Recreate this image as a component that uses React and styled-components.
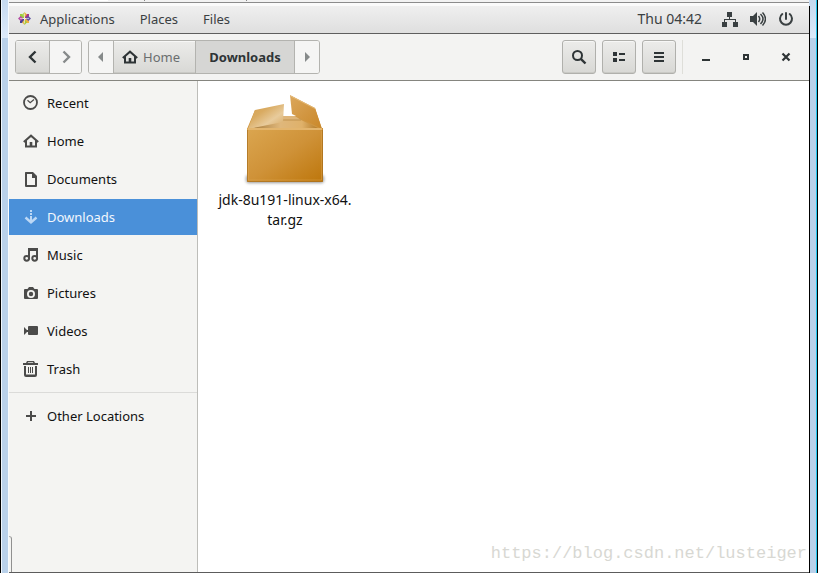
import React from 'react';
import styled, { createGlobalStyle, css } from 'styled-components';

const Global = createGlobalStyle`
  *, *::before, *::after { box-sizing: border-box; }
  body { margin: 0; background: #fff; }
  body, button, a { font-family: "Noto Sans", "Open Sans", sans-serif; font-size: 13px; line-height: 20px; }
  button { margin: 0; padding: 0; border: 0; background: none; color: inherit; cursor: default; }
  a { color: inherit; text-decoration: none; }
  svg { display: block; flex: none; }
`;

const Frame = styled.div`
  display: grid;
  grid-template-columns: 9px minmax(0, 1fr) 9px;
  min-height: 100vh;
`;

const frameFill = 'linear-gradient(#c5d9ef 0, #dceafa 38px, #b9d1ea 38px)';

const LeftEdge = styled.div`
  border-left: 1px solid #000;
  border-right: 1px solid #f6fafd;
  box-shadow: inset 1px 0 #eef6fd;
  background: ${frameFill};
`;

const RightEdge = styled.div`
  display: grid;
  grid-template-rows: 6px 1fr;
  border-right: 1px solid #000;
  box-shadow: inset -1px 0 #22c8f0;
  background: ${frameFill};
`;

const EdgeLine = styled.div`
  grid-row: 2;
  border-left: 1px solid #000;
`;

const Desktop = styled.div`
  display: flex;
  flex-direction: column;
  position: relative;
  border-bottom: 1px solid #5c5c5c;
`;

const TabStrip = styled.div`
  display: flex;
  height: 6px;
  border-bottom: 3px solid #fafafa;
  background: linear-gradient(#f2f2f2 2px, #8b8b8b 2px);
  padding-left: 71px;
`;

const Tab = styled.div`
  width: 28px;
  height: 1px;
  background: #fff;
`;

const TabMark = styled.div`
  width: 1px;
  height: 1px;
  margin-left: ${(p) => p.$gap};
  background: #888;
`;

const TopBar = styled.header`
  display: flex;
  align-items: center;
  height: 28px;
  padding: 0 15px 2px 8px;
  color: #3a4042;
  background: linear-gradient(#efefef, #dfdfdf);
  border-bottom: 1px solid #5e5e5e;
`;

const PanelMenu = styled.nav`
  display: flex;
  flex: 1;
  gap: 25px;
`;

const PanelButton = styled.button`
  display: flex;
  align-items: center;
  gap: 8px;
  height: 24px;
`;

const Status = styled.div`
  display: flex;
  align-items: center;
  gap: 12px;
`;

const Clock = styled.button`
  margin-right: 8px;
  font-size: 14px;
`;

const HeaderBar = styled.div`
  display: flex;
  align-items: center;
  height: 47px;
  padding: 0 3px 0 6px;
  color: #2e3436;
  background: #f3f3f2;
  border-bottom: 1px solid #85857f;
`;

const Group = styled.div`
  display: flex;
  height: 34px;
  margin-right: ${(p) => p.$after || '0'};
  border: 1px solid #b3b3af;
  border-radius: 3px;
  overflow: hidden;
`;

const raised = css`
  background: linear-gradient(#ececea, #d8d8d5);
  box-shadow: inset 0 1px #f7f7f6, inset 0 -1px #c9c9c5;
`;

const Segment = styled.button`
  display: flex;
  align-items: center;
  justify-content: center;
  gap: 5px;
  width: ${(p) => p.$width};
  color: ${(p) => (p.$dim ? '#868a8a' : '#2e3436')};
  background: #f5f5f4;
  ${(p) => p.$raised && raised}
  ${(p) => p.$current && 'background: #d6d6d4; font-weight: 700;'}
  & + & { border-left: 1px solid #b3b3af; }
`;

const Crumb = styled(Segment)`
  justify-content: flex-start;
  padding-left: 8px;
`;

const CrumbText = styled.span`
  color: #6a6e6f;
`;

const Spacer = styled.div`
  flex: 1;
`;

const Tools = styled.div`
  display: flex;
  gap: 6px;
`;

const ToolButton = styled.button`
  display: grid;
  place-items: center;
  width: 34px;
  height: 34px;
  border: 1px solid #b0b0ac;
  border-radius: 3px;
  ${raised}
`;

const WindowControls = styled.div`
  display: flex;
  height: 34px;
  margin-left: 6px;
  padding-left: 3px;
  border-left: 1px solid #deded9;
`;

const ControlButton = styled.button`
  display: grid;
  place-items: center;
  width: 40px;
`;

const Content = styled.div`
  display: grid;
  grid-template-columns: 189px minmax(0, 1fr);
  flex: 1;
`;

const Sidebar = styled.nav`
  padding-top: 4px;
  background: #f4f4f2;
  border-right: 1px solid #bdbdb9;
`;

const Places = styled.ul`
  display: flex;
  flex-direction: column;
  gap: 2px;
  margin: 0;
  padding: 0;
  list-style: none;
`;

const PlaceLink = styled.a`
  display: flex;
  align-items: center;
  gap: 8px;
  height: 36px;
  padding-left: 14px;
  color: ${(p) => (p.$active ? '#f2f7fd' : '#111')};
  background: ${(p) => (p.$active ? '#4a90d9' : 'transparent')};
  svg { color: ${(p) => (p.$active ? '#bdd8f5' : '#4b4b4a')}; }
`;

const Divider = styled.hr`
  height: 1px;
  margin: 5px 0;
  border: 0;
  background: #dbdbd9;
`;

const Files = styled.main`
  display: flex;
  align-items: flex-start;
  padding: 11px 17px;
  background: #fff;
`;

const FileItem = styled.button`
  display: flex;
  flex-direction: column;
  align-items: center;
  gap: 4px;
  width: 140px;
  color: #111;
`;

const FileName = styled.span`
  display: block;
  font-size: 14px;
`;

const Watermark = styled.div`
  position: absolute;
  right: 2px;
  bottom: 7px;
  color: #d8d8d3;
  font: 17px/22px "Liberation Mono", monospace;
`;

const CornerCurl = styled.div`
  position: absolute;
  left: 0;
  bottom: 0;
  width: 3px;
  height: 36px;
  border-top: 1px solid #aaa;
  border-right: 1px solid #909090;
  border-top-right-radius: 3px;
`;

const Svg = ({ size = 16, children, ...rest }) => (
  <svg width={size} height={size} viewBox={`0 0 ${size} ${size}`} fill="currentColor" aria-hidden="true" {...rest}>
    {children}
  </svg>
);

const HomeIcon = () => (
  <Svg>
    <path d="M0.8 9 8 2.7 15.2 9" fill="none" stroke="currentColor" strokeWidth="2" />
    <path d="M2 7h2v5.5h2.7V9h2.6v3.5H12V7h2v7.5H2z" />
  </Svg>
);

const RecentIcon = () => (
  <Svg fill="none" stroke="currentColor">
    <circle cx="7.5" cy="7.5" r="6.5" strokeWidth="1.8" />
    <path d="M4.5 5.2 7.2 7.8 11 4.5" strokeWidth="1.2" />
  </Svg>
);

const DocumentIcon = () => (
  <Svg><path fillRule="evenodd" d="M2 1.5Q2 1 2.7 1H10l4 4v10q0 1-1 1H3q-1 0-1-1zM4 3v11h8V7H9V3z" /></Svg>
);

const DownloadIcon = () => (
  <Svg>
    <path d="M7 1h2v2H7zM7 4h2v2H7zM7 7h2v5H7z" />
    <path d="M2.500 8.500 8 13.500 13.500 8.500" fill="none" stroke="currentColor" strokeWidth="2.400" />
  </Svg>
);

const MusicIcon = () => (
  <Svg>
    <path d="M5 1h10v11h-2V4H7v8H5z" />
    <circle cx="3.7" cy="11.3" r="2.4" fill="none" stroke="currentColor" strokeWidth="2" />
    <circle cx="11.7" cy="11.3" r="2.4" fill="none" stroke="currentColor" strokeWidth="2" />
  </Svg>
);

const CameraIcon = () => (
  <Svg>
    <path fillRule="evenodd" d="M2 4h2.5L6 2h4l1.500 2H14q1 0 1 1v8q0 1-1 1H2q-1 0-1-1V5q0-1 1-1zM8 5a4 4 0 1 0 0 8 4 4 0 0 0 0-8z" />
    <circle cx="8" cy="9" r="2.2" />
  </Svg>
);

const VideoIcon = () => (
  <Svg><path d="M1 4l3 3v2l-3 3zM6 3h8q1 0 1 1v7q0 1-1 1H6q-1 0-1-1V9H4V7h1V4q0-1 1-1z" /></Svg>
);

const TrashIcon = () => (
  <Svg>
    <path d="M0 2h3l1-2h7l1 2h3v2H0zM5 1.200 4.700 2h5.600L10 1.200z" fillRule="evenodd" />
    <path d="M1 5h2v8.500h9V5h2v9q0 2-2 2H3q-2 0-2-2zM5 6h1v6H5zM7 6h1v6H7zM9 6h1v6H9z" />
  </Svg>
);

const PlusIcon = () => <Svg><path d="M7 3h2v4h4v2H9v4H7V9H3V7h4z" /></Svg>;

const PinwheelIcon = () => (
  <Svg size={15}>
    <path d="M3 3h4v4H3z" fill="#9dcb3c" />
    <path d="M8 3h4v4H8z" fill="#a3368d" />
    <path d="M3 8h4v4H3z" fill="#4a3f94" />
    <path d="M8 8h4v4H8z" fill="#f0b040" />
    <path d="M7.500 1 5 3.500 7 6h.5z" fill="#b4d865" />
    <path d="M7.500 1 10 3.500 8 6h-.5z" fill="#f0b040" />
    <path d="M1 7.500 3.500 5 6 7v.5zM1 7.500 3.500 10 6 8v-.5z" fill="#b64fa5" />
    <path d="M14 7.500 11.500 5 9 7v.5zM14 7.500 11.500 10 9 8v-.5z" fill="#6258a5" />
    <path d="M7.500 14 5 11.500 7 9h.5z" fill="#eab64e" />
    <path d="M7.500 14 10 11.500 8 9h-.5z" fill="#9dcb3c" />
    <path d="M7 3h1v9H7zM3 7h9v1H3z" fill="#f4f0e6" opacity=".6" />
  </Svg>
);

const ChevronIcon = ({ right }) => (
  <Svg fill="none" stroke="currentColor" strokeWidth="2.400">
    <path d={right ? 'M5.500 2.500 11 8l-5.500 5.500' : 'M10.500 2.500 5 8l5.500 5.500'} />
  </Svg>
);

const TriangleIcon = ({ right }) => (
  <Svg size={10}><path d={right ? 'M3 0 8 5 3 10z' : 'M7 0 2 5l5 5z'} /></Svg>
);

const NetworkIcon = () => (
  <Svg><path d="M5 1h5v5H8v2h6v3h2v5h-5v-5h2V9H3v2h2v5H0v-5h2V8h5V6H5z" /></Svg>
);

const VolumeIcon = () => (
  <Svg>
    <path d="M0 5h3l4-4v14l-4-4H0z" />
    <path d="M8.500 5q2.500 3 0 6M10.500 3q5 5 0 10M12.500 1.500q6 6.500 0 13" fill="none" stroke="currentColor" strokeWidth="1.500" />
  </Svg>
);

const PowerIcon = () => (
  <Svg fill="none" stroke="currentColor" strokeWidth="2" strokeLinecap="round">
    <path d="M4.300 3a6 6 0 1 0 7.400 0M8 2v6" />
  </Svg>
);

const SearchIcon = () => (
  <Svg fill="none" stroke="currentColor">
    <circle cx="6.500" cy="6.500" r="4.500" strokeWidth="2" />
    <path d="m9.800 9.800 4.700 4.700" strokeWidth="2.400" />
  </Svg>
);

const ListIcon = () => (
  <Svg><path d="M2 3h4v4H2zM2 9h4v4H2zM8 4h6v2H8zM8 10h6v2H8z" /></Svg>
);

const MenuIcon = () => <Svg><path d="M3 3h10v2H3zM3 7h10v2H3zM3 11h10v2H3z" /></Svg>;
const MinimizeIcon = () => <Svg><path d="M4 10h8v2H4z" /></Svg>;
const MaximizeIcon = () => <Svg><path fillRule="evenodd" d="M5 5h6v6H5zM7 7v2h2V7z" /></Svg>;
const CloseIcon = () => (
  <Svg stroke="currentColor" strokeWidth="2.200"><path d="m4.500 4.500 7 7m0-7-7 7" /></Svg>
);

const PackageIcon = () => (
  <svg width="96" height="94" viewBox="0 0 96 94" aria-hidden="true">
    <defs>
      <linearGradient id="front" x1="0" y1="0" x2="1" y2="1">
        <stop offset="0" stopColor="#dba650" />
        <stop offset=".5" stopColor="#cf9238" />
        <stop offset="1" stopColor="#bd760b" />
      </linearGradient>
      <linearGradient id="leftFlap" x1="0" y1="0" x2="1" y2="1">
        <stop offset="0" stopColor="#d69f4b" />
        <stop offset=".35" stopColor="#d9ab62" />
        <stop offset=".65" stopColor="#e8cb9c" />
        <stop offset="1" stopColor="#d5a55c" />
      </linearGradient>
      <linearGradient id="rightFlap" x1="0" y1="0" x2="1" y2="1">
        <stop offset="0" stopColor="#dba75c" />
        <stop offset="1" stopColor="#c98729" />
      </linearGradient>
      <linearGradient id="inside" x1="0" y1="0" x2="1" y2="0">
        <stop offset="0" stopColor="#a07433" />
        <stop offset=".45" stopColor="#dfb77b" />
        <stop offset=".75" stopColor="#dfb16a" />
        <stop offset="1" stopColor="#ae7420" />
      </linearGradient>
      <filter id="shadow" x="-10%" y="-50%" width="120%" height="200%"><feGaussianBlur stdDeviation="1.500" /></filter>
    </defs>
    <rect x="9" y="83" width="78" height="8" rx="3" fill="#555" opacity=".6" filter="url(#shadow)" />
    <path d="M18 18 46 24h20l12-8 7 21H10z" fill="#cf9642" />
    <path d="M11 37 46 28h18l19 9z" fill="url(#inside)" />
    <path d="M46 24h12l6 4H46z" fill="#deb57a" />
    <path d="M46 28h18" stroke="#c0924e" />
    <path d="M18 18 47 12 46 30 11 37z" fill="url(#leftFlap)" />
    <path d="M53 3 78 16l7 21L55 22z" fill="url(#rightFlap)" />
    <path d="M53.500 4 78 16.500" stroke="#e5ba77" fill="none" />
    <path d="M10 36h76v53q0 1-1 1H11q-1 0-1-1z" fill="url(#front)" />
    <path d="M10.500 38v51.500h75V38" fill="none" stroke="#a97120" opacity=".75" />
    <path d="M11 37h74" stroke="#e3b56e" strokeWidth="2" />
    <path d="M11.500 39v49h73V39" fill="none" stroke="#e2ab57" opacity=".4" />
  </svg>
);

const PLACES = [
  ['Recent', RecentIcon],
  ['Home', HomeIcon],
  ['Documents', DocumentIcon],
  ['Downloads', DownloadIcon],
  ['Music', MusicIcon],
  ['Pictures', CameraIcon],
  ['Videos', VideoIcon],
  ['Trash', TrashIcon],
];

export default function App() {
  return (
    <>
      <Global />
      <Frame>
        <LeftEdge />
        <Desktop>
          <TabStrip>
            <Tab />
            <TabMark $gap="36px" />
            <TabMark $gap="101px" />
          </TabStrip>
          <TopBar>
            <PanelMenu>
              <PanelButton><PinwheelIcon />Applications</PanelButton>
              <PanelButton>Places</PanelButton>
              <PanelButton>Files</PanelButton>
            </PanelMenu>
            <Status>
              <Clock>Thu 04:42</Clock>
              <button aria-label="Network"><NetworkIcon /></button>
              <button aria-label="Volume"><VolumeIcon /></button>
              <button aria-label="Power"><PowerIcon /></button>
            </Status>
          </TopBar>
          <HeaderBar>
            <Group $after="6px">
              <Segment $width="33px" $raised aria-label="Back"><ChevronIcon /></Segment>
              <Segment $width="32px" $dim aria-label="Forward"><ChevronIcon right /></Segment>
            </Group>
            <Group>
              <Segment $width="24px" $dim aria-label="Scroll path left"><TriangleIcon /></Segment>
              <Crumb $width="82px" $raised><HomeIcon /><CrumbText>Home</CrumbText></Crumb>
              <Segment $width="99px" $current>Downloads</Segment>
              <Segment $width="25px" $dim aria-label="Scroll path right"><TriangleIcon right /></Segment>
            </Group>
            <Spacer />
            <Tools>
              <ToolButton aria-label="Search"><SearchIcon /></ToolButton>
              <ToolButton aria-label="List view"><ListIcon /></ToolButton>
              <ToolButton aria-label="Menu"><MenuIcon /></ToolButton>
            </Tools>
            <WindowControls>
              <ControlButton aria-label="Minimize"><MinimizeIcon /></ControlButton>
              <ControlButton aria-label="Maximize"><MaximizeIcon /></ControlButton>
              <ControlButton aria-label="Close"><CloseIcon /></ControlButton>
            </WindowControls>
          </HeaderBar>
          <Content>
            <Sidebar aria-label="Places">
              <Places>
                {PLACES.map(([name, Icon]) => (
                  <li key={name}>
                    <PlaceLink href="#" $active={name === 'Downloads'}><Icon />{name}</PlaceLink>
                  </li>
                ))}
              </Places>
              <Divider />
              <PlaceLink href="#"><PlusIcon />Other Locations</PlaceLink>
            </Sidebar>
            <Files>
              <FileItem>
                <PackageIcon />
                <FileName>jdk-8u191-linux-x64.<br />tar.gz</FileName>
              </FileItem>
            </Files>
          </Content>
          <CornerCurl />
          <Watermark>https://blog.csdn.net/lusteiger</Watermark>
        </Desktop>
        <RightEdge><EdgeLine /></RightEdge>
      </Frame>
    </>
  );
}
